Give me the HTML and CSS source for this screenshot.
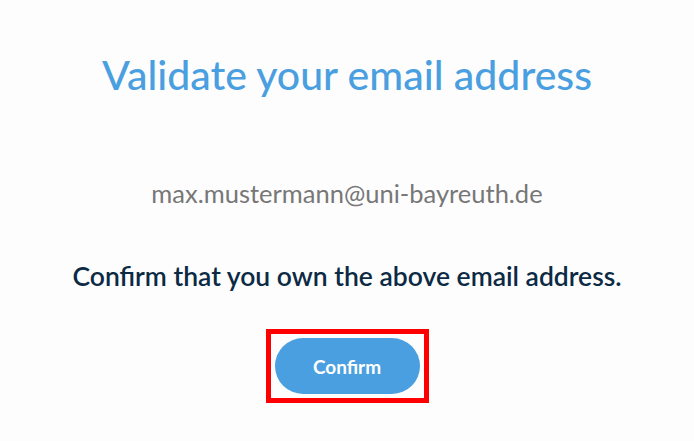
FILE: index.html
```html
<!DOCTYPE html>
<html>
<head>
<meta charset="utf-8">
<link rel="stylesheet" href="styles.css">
</head>
<body>
<main class="page">
  <h1 class="title">Validate your email address</h1>
  <p class="email">max.mustermann@uni-bayreuth.de</p>
  <p class="lead">Confirm that you own the above email address.</p>
  <div class="highlight">
    <button class="btn" type="button">Confirm</button>
  </div>
</main>
</body>
</html>
```
FILE: styles.css
```css
html, body {
  margin: 0;
  padding: 0;
  background: #fdfdfd;
}
.page {
  font-family: Lato, "Open Sans", sans-serif;
  display: flex;
  flex-direction: column;
  align-items: center;
  text-align: center;
  padding-top: 50px;
}
.title {
  margin: 0;
  font-size: 41px;
  font-weight: 500;
  color: #4a9fe0;
  line-height: 50px;
}
.email {
  margin: 78px 0 0;
  font-size: 25.5px;
  color: #777777;
  line-height: 30px;
}
.lead {
  margin: 53px 0 0;
  font-size: 26.5px;
  font-weight: 600;
  color: #0c2a44;
  line-height: 30px;
}
.highlight {
  margin-top: 38px;
  border: 5px solid #ff0000;
  padding: 4px;
}
.btn {
  display: block;
  width: 145px;
  height: 56px;
  border: none;
  border-radius: 28px;
  background: #4a9fe0;
  color: #ffffff;
  font-family: Lato, sans-serif;
  font-size: 19px;
  font-weight: 700;
  cursor: pointer;
}
```
